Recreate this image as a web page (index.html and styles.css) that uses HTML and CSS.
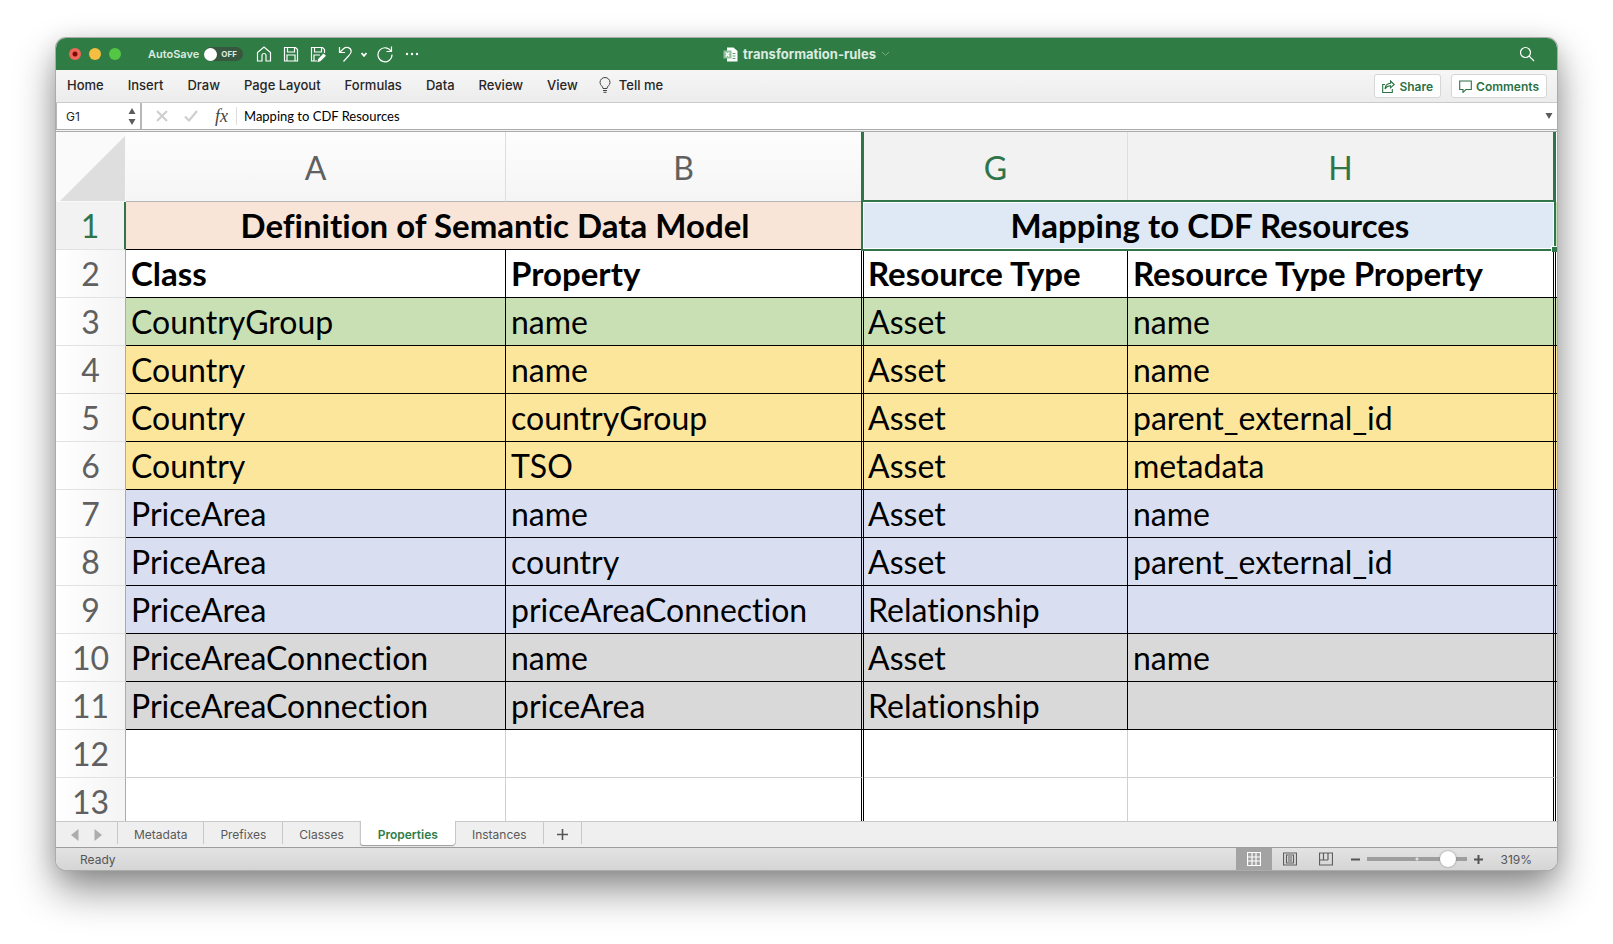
FILE: index.html
```html
<!DOCTYPE html>
<html lang="en">
<head>
<meta charset="utf-8">
<title>transformation-rules</title>
<link rel="stylesheet" href="styles.css">
</head>
<body>
<main class="window">
  <header class="titlebar">
    <div class="title-left">
      <div class="lights">
        <button class="light close" aria-label="Close"></button>
        <button class="light minimize" aria-label="Minimize"></button>
        <button class="light maximize" aria-label="Zoom"></button>
      </div>
      <span class="autosave" id="autosave-label">AutoSave</span>
      <button class="toggle" role="switch" aria-checked="false" aria-labelledby="autosave-label"><span class="knob"></span>OFF</button>
      <div class="quick">
        <button aria-label="Home"><svg width="16" height="18" viewBox="0 0 16 18"><path d="M1.5 16V7.5L8 2l6.500 5.500V16H10v-5.500a2 2 0 0 0-4 0V16z"/></svg></button>
        <button aria-label="Save"><svg width="16" height="18" viewBox="0 0 16 18"><path d="M1.500 2.500h11l2 2v11.500h-13zM4.500 2.500v4.500h7v-4.500M4 16v-6h8v6"/></svg></button>
        <button aria-label="Save as"><svg width="17" height="18" viewBox="0 0 17 18"><path d="M7 16H1.500V2.500h11l2 2V8M4.500 2.500v4.500h7v-4.500M4 16v-6h6"/><path class="solid" d="M13.500 8.500l2.500 2.200-5.600 5.600-3 .9.700-3.100z"/></svg></button>
        <button class="undo" aria-label="Undo"><svg width="15" height="18" viewBox="0 0 15 18"><path d="M1.500 2v5.500H7M1.500 7.500l4-3.800c3-2.600 7.500-1 7.700 2.600.1 1.900-1.200 3.100-2.300 4.200L5.500 16.500"/></svg></button>
        <button class="more-undo" aria-label="Undo history"><svg width="8" height="18" viewBox="0 0 8 18"><path class="thick" d="M1.500 8l2.500 2.800L6.500 8"/></svg></button>
        <button class="redo" aria-label="Repeat"><svg width="18" height="18" viewBox="0 0 18 18"><path d="M15.200 6.500A7 7 0 1 0 16 9.500M15.500 1.500v5h-5"/></svg></button>
        <button class="dots-btn" aria-label="More commands"><svg width="16" height="18" viewBox="0 0 16 18"><g class="dots"><circle cx="3" cy="9" r="1.200"/><circle cx="8" cy="9" r="1.200"/><circle cx="13" cy="9" r="1.200"/></g></svg></button>
      </div>
    </div>
    <div class="doc">
      <svg width="15" height="15" viewBox="0 0 15 15"><path fill="#fff" d="M4 .5h6.500L14.500 4v10.500H4z"/><path d="M9.500 6.500h3M9.500 9h3M9.500 11.500h3" stroke="#62a476"/><path fill="#8fc09c" d="M.500 3.500h8v8h-8z"/><path d="M2.700 5.500l3.600 4M6.300 5.500l-3.600 4" stroke="#fff" stroke-width="1.200"/></svg>
      <h1>transformation-rules</h1>
      <svg class="doc-chevron" width="9" height="8" viewBox="0 0 9 8"><path d="M1 2l3.500 3.500L8 2"/></svg>
    </div>
    <button class="search" aria-label="Search"><svg width="16" height="16" viewBox="0 0 16 16"><circle cx="6.500" cy="6.500" r="5"/><path d="M10.200 10.200l4.800 4.800"/></svg></button>
  </header>

  <nav class="ribbon" aria-label="Ribbon">
    <div class="menu">
      <a href="#home">Home</a>
      <a href="#insert">Insert</a>
      <a href="#draw">Draw</a>
      <a href="#layout">Page Layout</a>
      <a href="#formulas">Formulas</a>
      <a href="#data">Data</a>
      <a href="#review">Review</a>
      <a href="#view">View</a>
      <a class="tell" href="#tell"><svg width="12" height="16" viewBox="0 0 12 16"><path d="M4 11.500C4 9 1 8.500 1 5.500a5 5 0 0 1 10 0c0 3-3 3.500-3 6zM4 13.500h4M4.500 15.300h3"/></svg>Tell me</a>
    </div>
    <div class="actions">
      <button><svg width="13" height="13" viewBox="0 0 13 13"><path d="M3 4.500H.700v8h9.600V9M8.500 1l3.700 3.500-3.700 3.300V5.800C6 5.800 4.500 6.700 3 9c.3-3.500 2.500-5.500 5.500-5.700z"/></svg>Share</button>
      <button><svg width="13" height="13" viewBox="0 0 13 13"><path d="M.700 1h11.600v8.500H7L4 12.300V9.500H.700z"/></svg>Comments</button>
    </div>
  </nav>

  <section class="formula" aria-label="Formula bar">
    <div class="namebox">
      <input aria-label="Name box" value="G1">
      <svg width="8" height="20" viewBox="0 0 8 20"><path d="M4 2l3.500 6h-7zM4 19l3.500-6h-7z"/></svg>
    </div>
    <button class="fbtn" aria-label="Cancel"><svg width="12" height="12" viewBox="0 0 12 12"><path d="M1 1l10 10M11 1L1 11"/></svg></button>
    <button class="fbtn check" aria-label="Enter"><svg width="14" height="12" viewBox="0 0 14 12"><path d="M1 6.500l4 4L13 1"/></svg></button>
    <button class="fx" aria-label="Insert function">fx</button>
    <input class="fvalue" aria-label="Formula" value="Mapping to CDF Resources">
    <button class="expand" aria-label="Expand formula bar"><svg width="8" height="6" viewBox="0 0 8 6"><path d="M.500 0h7L4 6z"/></svg></button>
  </section>

  <section class="sheet" aria-label="Worksheet">
    <table>
      <colgroup><col class="c-num"><col class="c-a"><col class="c-b"><col class="c-g"><col><col class="c-end"></colgroup>
      <thead>
        <tr>
          <td class="corner"><svg viewBox="0 0 66 65" preserveAspectRatio="none"><path d="M66 0v65H0z"/></svg></td>
          <th scope="col">A</th><th scope="col" class="pre">B</th>
          <th scope="col" class="sel">G</th><th scope="col" class="sel last">H</th><td></td>
        </tr>
      </thead>
      <tbody>
        <tr class="bold"><th scope="row" class="on">1</th><td class="model" colspan="2">Definition of Semantic Data Model</td><td class="mapping" colspan="2">Mapping to CDF Resources<span class="handle"></span></td><td class="green"></td></tr>
        <tr class="bold"><th scope="row">2</th><td>Class</td><td>Property</td><td>Resource Type</td><td>Resource Type Property</td><td></td></tr>
        <tr class="green"><th scope="row">3</th><td>CountryGroup</td><td>name</td><td>Asset</td><td>name</td><td></td></tr>
        <tr class="yellow"><th scope="row">4</th><td>Country</td><td>name</td><td>Asset</td><td>name</td><td></td></tr>
        <tr class="yellow"><th scope="row">5</th><td>Country</td><td>countryGroup</td><td>Asset</td><td>parent_external_id</td><td></td></tr>
        <tr class="yellow"><th scope="row">6</th><td>Country</td><td>TSO</td><td>Asset</td><td>metadata</td><td></td></tr>
        <tr class="blue"><th scope="row">7</th><td>PriceArea</td><td>name</td><td>Asset</td><td>name</td><td></td></tr>
        <tr class="blue"><th scope="row">8</th><td>PriceArea</td><td>country</td><td>Asset</td><td>parent_external_id</td><td></td></tr>
        <tr class="blue"><th scope="row">9</th><td>PriceArea</td><td>priceAreaConnection</td><td>Relationship</td><td></td><td></td></tr>
        <tr class="gray"><th scope="row">10</th><td>PriceAreaConnection</td><td>name</td><td>Asset</td><td>name</td><td></td></tr>
        <tr class="gray"><th scope="row">11</th><td>PriceAreaConnection</td><td>priceArea</td><td>Relationship</td><td></td><td></td></tr>
        <tr class="empty"><th scope="row">12</th><td></td><td></td><td></td><td></td><td></td></tr>
        <tr class="empty"><th scope="row">13</th><td></td><td></td><td></td><td></td><td></td></tr>
      </tbody>
    </table>
  </section>

  <nav class="tabs" aria-label="Sheets">
    <div class="arrows">
      <button aria-label="Previous sheet"><svg width="8" height="12" viewBox="0 0 8 12"><path d="M7.500 0v12L0 6z"/></svg></button>
      <button aria-label="Next sheet"><svg width="8" height="12" viewBox="0 0 8 12"><path d="M.500 0v12L8 6z"/></svg></button>
    </div>
    <button class="tab">Metadata</button>
    <button class="tab">Prefixes</button>
    <button class="tab">Classes</button>
    <button class="tab active">Properties</button>
    <button class="tab">Instances</button>
    <button class="tab add" aria-label="Add sheet"><svg width="11" height="11" viewBox="0 0 11 11"><path d="M5.500 0v11M0 5.500h11"/></svg></button>
  </nav>

  <footer class="status">
    <span class="ready">Ready</span>
    <div class="views">
      <button class="current" aria-label="Normal view"><svg width="14" height="14" viewBox="0 0 14 14"><path d="M.500.500h13v13H.500zM.500 5h13M.500 9h13M5 .500v13M9 .500v13"/></svg></button>
      <button aria-label="Page layout view"><svg width="14" height="14" viewBox="0 0 14 14"><path d="M.500 1h13v12H.500zM3.500 3h7v8h-7zM5 5h4M5 7h4M5 9h4"/></svg></button>
      <button aria-label="Page break preview"><svg width="14" height="14" viewBox="0 0 14 14"><path d="M.500 1h13v12H.500zM4.500 1v7M9 1v7M.500 8H9"/></svg></button>
    </div>
    <div class="zoom">
      <button aria-label="Zoom out"><svg width="9" height="9" viewBox="0 0 9 9"><path d="M0 4.500h9"/></svg></button>
      <input type="range" min="0" max="100" value="86" aria-label="Zoom level">
      <button aria-label="Zoom in"><svg width="9" height="9" viewBox="0 0 9 9"><path d="M0 4.500h9M4.500 0v9"/></svg></button>
    </div>
    <span class="percent">319%</span>
  </footer>
</main>
</body>
</html>
```
FILE: styles.css
```css
* { box-sizing: border-box; }
body {
  margin: 0;
  height: 100vh;
  min-height: 400px;
  padding: 38px 56px 74px;
  background: #fff;
  display: flex;
  font-family: Inter, "Liberation Sans", sans-serif;
  font-size: 13px;
  color: #262626;
  overflow: hidden;
}
button, input { font: inherit; color: inherit; border: 0; margin: 0; padding: 0; background: none; }
svg { display: block; flex: none; fill: none; stroke: none; }
.window {
  flex: 1;
  min-width: 0;
  display: flex;
  flex-direction: column;
  border-radius: 10px;
  overflow: hidden;
  background: #fff;
  box-shadow: 0 0 0 1px #a9aca9, 0 20px 40px rgba(0, 0, 0, .44), 0 4px 22px rgba(0, 0, 0, .12);
}

/* Title bar */
.titlebar {
  display: grid;
  grid-template-columns: 1fr auto 1fr;
  align-items: center;
  height: 32px;
  background: #2f7c44;
  color: #dcebe0;
}
.title-left { display: flex; align-items: center; padding-left: 13px; }
.lights { display: flex; gap: 8px; }
.light { width: 12px; height: 12px; border-radius: 50%; }
.close { background: radial-gradient(circle, #7a0c08 2px, #f2655a 3px); }
.minimize { background: #f6be40; }
.maximize { background: #54c645; }
.autosave { margin-left: 27px; font-size: 11px; font-weight: 600; }
.toggle {
  display: flex;
  align-items: center;
  gap: 4px;
  width: 39px;
  height: 14px;
  margin-left: 5px;
  border-radius: 7px;
  background: #38573f;
  font-size: 8px;
  font-weight: 700;
}
.knob { width: 13px; height: 13px; border-radius: 50%; background: #fff; }
.quick { display: flex; align-items: center; gap: 11px; margin-left: 13px; }
.quick svg, .search svg { stroke: #fff; stroke-width: 1.2; }
.quick .solid, .quick .dots { fill: #fff; stroke: none; }
.quick .thick { stroke-width: 1.8; }
.more-undo { margin-left: -4px; }
.redo { margin-left: -3px; }
.dots-btn { margin-left: -1px; }
.doc { display: flex; align-items: center; gap: 5px; }
.doc h1 { margin: 0; font-size: 13px; font-weight: 700; }
.doc-chevron { stroke: #75aa83; }
.search { justify-self: end; margin-right: 22px; }

/* Ribbon */
.ribbon {
  display: flex;
  justify-content: space-between;
  align-items: center;
  height: 33px;
  padding: 0 10px 0 11px;
  border-bottom: 1px solid #cbcbcb;
  background: linear-gradient(#f6f6f6, #ececec);
}
.menu { display: flex; align-items: center; gap: 24px; padding-bottom: 3px; font-weight: 500; }
.menu a { color: inherit; text-decoration: none; }
.menu .tell { display: flex; align-items: center; gap: 8px; margin-left: -3px; }
.tell svg { stroke: #444; }
.actions { display: flex; gap: 10px; }
.actions button {
  display: flex;
  align-items: center;
  gap: 4px;
  height: 24px;
  padding: 0 7px;
  border: 1px solid #d6d6d6;
  border-radius: 3px;
  background: #fff;
  color: #2b7144;
  font-size: 12px;
  font-weight: 600;
}
.actions svg { stroke: #2b7144; stroke-width: 1.1; }

/* Formula bar */
.formula {
  display: flex;
  align-items: center;
  height: 29px;
  padding-bottom: 3px;
  background: linear-gradient(#fff 26px, #aaa 26px 27px, #f4f4f4 27px 28px, #aaa 28px);
}
.namebox {
  display: flex;
  align-items: center;
  align-self: stretch;
  width: 86px;
  padding: 0 4px 0 9px;
  border-left: 1px solid #b8b8b8;
  border-right: 2px solid #b8b8b8;
}
.namebox input { flex: 1; min-width: 0; font-size: 12px; }
.namebox path, .expand path { fill: #5c5c5c; }
.fbtn { margin-left: 14px; }
.fbtn.check { margin-left: 16px; }
.fbtn path { stroke: #cfcfcf; stroke-width: 2.2; }
.fx { margin-left: 17px; padding-right: 8px; border-right: 1px solid #ddd; font: italic 18px/18px "Liberation Serif", serif; color: #444; }
.fvalue { flex: 1; padding-left: 7px; font: 13px Lato, sans-serif; font-variant-ligatures: none; color: #000; }
.expand { margin-right: 4px; }

/* Grid */
.sheet {
  flex: 1;
  min-height: 0;
  overflow: hidden;
  font-family: Lato, Inter, sans-serif;
  font-size: 32px;
  font-variant-ligatures: none;
  color: #000;
}
table { width: 100%; table-layout: fixed; border-collapse: separate; border-spacing: 0; }
.c-num { width: 70px; }
.c-a { width: 380px; }
.c-b { width: 358px; }
.c-g { width: 264px; }
.c-end { width: 1px; }
tr { height: 48px; }
td, th { padding: 0; line-height: 47px; white-space: nowrap; }
tbody td, tbody th { vertical-align: top; }
thead tr { height: 70px; }
thead th {
  padding-top: 2px;
  border-right: 1px solid #dedede;
  border-bottom: 1px solid #b5b5b5;
  background: linear-gradient(#fdfdfd, #f5f5f5);
  color: #606060;
  font-weight: 400;
}
thead .pre { border-right: 3px solid #2f7549; }
thead .sel { background: #f2f2f2; color: #2f7549; }
thead .last { border-right: 3px solid #2f7549; }
.corner { padding: 4px 1px 1px 4px; background: #fafafa; }
.corner svg { width: 100%; height: 65px; fill: #dedede; }
tbody th {
  border-right: 1px solid #ababab;
  border-bottom: 1px solid #e2e2e2;
  background: linear-gradient(90deg, #fff, #f4f4f4);
  color: #606060;
  font-weight: 400;
}
tbody .on { border-right: 2px solid #2f7549; background: #f2f2f2; color: #2f7549; }
tbody td { padding-left: 5px; border-right: 1px solid #000; border-bottom: 1px solid #000; }
tbody td:nth-child(3), tbody td:nth-child(5) { border-right: 3px double #000; }
tbody td:nth-child(4) { padding-left: 4px; }
tbody td:last-child { padding: 0; border-right: 0; }
.bold td { font-size: 33px; font-weight: 700; }
.green td, td.green { background: #c9e0b5; }
.yellow td { background: #fbe69c; }
.blue td { background: #d9dff1; }
.gray td { background: #d9d9d9; }
.empty td { border-color: #d0d0d0; }
.empty td:nth-child(3), .empty td:nth-child(5) { border-right-color: #000; }
tbody .model { padding: 0; border-right: 0; background: #f8e5d8; text-align: center; }
tbody td.mapping { position: relative; padding: 0; border-right: 0; background: #dfe9f5; text-align: center; }
.mapping::after {
  content: "";
  position: absolute;
  z-index: 1;
  inset: -2px 0 -2px -3px;
  border: 2px solid #2f7549;
  box-shadow: inset 0 0 0 1px #fff;
}
.handle {
  position: absolute;
  z-index: 2;
  right: -1px;
  bottom: -3px;
  width: 6px;
  height: 6px;
  border: 1px solid #fff;
  border-width: 1px 0 0 1px;
  background: #2f7549;
}

/* Sheet tabs */
.tabs {
  display: flex;
  align-items: flex-start;
  height: 26px;
  border-top: 1px solid #c8c8c8;
  background: #efefef;
  font-size: 12px;
  color: #595959;
}
.arrows { display: flex; align-items: center; gap: 15px; height: 26px; padding: 0 15px; }
.arrows path { fill: #adadad; }
.tab { height: 22px; padding: 2px 16px 0; border-left: 1px solid #c8c8c8; }
.tab.active {
  height: 24px;
  margin-top: -1px;
  padding: 3px 17px 0;
  border-radius: 0 0 3px 3px;
  background: #fff;
  box-shadow: 0 1px 1px #999;
  color: #2f7d49;
  font-weight: 600;
}
.tab.add { padding: 2px 13px 0; border-right: 1px solid #c8c8c8; }
.add path { stroke: #555; stroke-width: 1.6; }

/* Status bar */
.status {
  display: flex;
  align-items: center;
  height: 23px;
  border-top: 1px solid #9d9d9d;
  background: linear-gradient(#e3e3e3, #d5d5d5);
  color: #555;
  font-size: 12px;
}
.ready { flex: 1; padding-left: 24px; }
.views, .zoom { display: flex; align-items: center; align-self: stretch; }
.views button { display: grid; place-items: center; width: 36px; align-self: stretch; }
.views svg { stroke: #5e5e5e; stroke-width: 1.2; }
.views .current { background: #a3a3a3; }
.views .current svg { stroke: #fff; }
.zoom { gap: 7px; margin-left: 7px; }
.zoom path { stroke: #555; stroke-width: 2; }
.zoom input {
  appearance: none;
  width: 100px;
  height: 16px;
  background: radial-gradient(circle, #ddd 1px, transparent 2px), linear-gradient(#9e9e9e, #9e9e9e) center / 100% 4px no-repeat;
}
.zoom input::-webkit-slider-thumb {
  appearance: none;
  width: 16px;
  height: 16px;
  border-radius: 50%;
  background: #fff;
  box-shadow: 0 0 2px #777;
}
.percent { padding: 0 25px 0 17px; }
```
